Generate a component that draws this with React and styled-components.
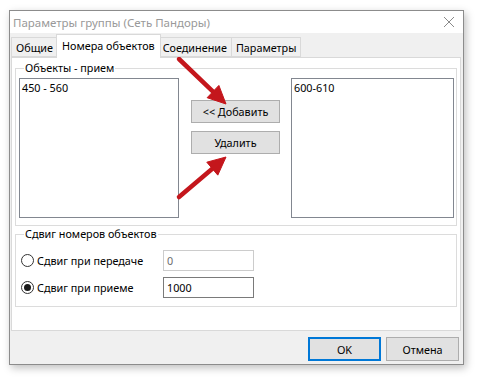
import React from 'react';
import styled, { createGlobalStyle } from 'styled-components';

const GlobalStyle = createGlobalStyle`
  body {
    margin: 0;
    background: #ffffff;
    font-family: "Noto Sans", "Open Sans", sans-serif;
    font-size: 10.8px;
    color: #000;
  }
`;

const Stage = styled.div`
  position: relative;
  width: 481px;
  height: 383px;
  padding: 10px 0 0 9px;
  box-sizing: border-box;
`;

const Window = styled.div`
  width: 455px;
  height: 355px;
  box-sizing: border-box;
  border: 1px solid #8c8c8c;
  background: #f0f0f0;
  box-shadow: 2px 3px 8px rgba(0, 0, 0, 0.25);
  display: flex;
  flex-direction: column;
`;

const TitleBar = styled.div`
  height: 22px;
  background: #ffffff;
  display: flex;
  align-items: center;
  justify-content: space-between;
  padding: 0 8px 0 3px;
  color: #999999;
  font-size: 11.5px;
`;

const Close = styled.svg`
  width: 10px;
  height: 10px;
  margin-right: 1px;
`;

const TabStrip = styled.div`
  display: flex;
  align-items: flex-end;
  height: 24px;
  padding-left: 1px;
  position: relative;
  z-index: 1;
`;

const Tab = styled.div`
  height: ${p => (p.$active ? '24px' : '20px')};
  padding: 0 ${p => (p.$active ? '5px' : '4px')};
  margin: 0 ${p => (p.$active ? '-2px' : '0')} ${p => (p.$active ? '-1px' : '0')};
  background: ${p => (p.$active ? '#ffffff' : '#f0f0f0')};
  border: 1px solid #d9d9d9;
  border-bottom: ${p => (p.$active ? 'none' : '1px solid #d9d9d9')};
  border-left-width: ${p => (p.$first || p.$active ? '1px' : '0')};
  display: flex;
  align-items: ${p => (p.$active ? 'flex-start' : 'center')};
  padding-top: ${p => (p.$active ? '3px' : '0')};
  box-sizing: border-box;
  position: relative;
  z-index: ${p => (p.$active ? 2 : 1)};
`;

const Panel = styled.div`
  margin: 0 2px 0 1px;
  height: 274px;
  box-sizing: border-box;
  border: 1px solid #d9d9d9;
  background: #ffffff;
  padding: 3px 3px 0 3px;
  display: flex;
  flex-direction: column;
  gap: 1px;
`;

const Group = styled.fieldset`
  margin: 0;
  border: 1px solid #dcdcdc;
  padding: 0 2px 0 3px;
  height: ${p => p.$h}px;
  box-sizing: border-box;
`;

const Legend = styled.legend`
  padding: 0 1px;
  margin-left: 5px;
  font-size: 10.8px;
  line-height: 14px;
`;

const ObjectsRow = styled.div`
  display: flex;
  align-items: flex-start;
  margin-top: 3px;
`;

const ListBox = styled.div`
  width: ${p => p.$w}px;
  height: 140px;
  box-sizing: border-box;
  border: 1px solid #828790;
  background: #ffffff;
  padding: 1px 2px;
  line-height: 15px;
`;

const ButtonColumn = styled.div`
  display: flex;
  flex-direction: column;
  gap: 8px;
  margin: 22px 11px 0 12px;
`;

const Button = styled.button`
  width: ${p => p.$w || 89}px;
  height: ${p => p.$h || 23}px;
  box-sizing: border-box;
  background: #e1e1e1;
  border: ${p => (p.$default ? '2px solid #0078d7' : '1px solid #adadad')};
  font-family: inherit;
  font-size: 10.8px;
  color: #000;
  padding: 0;
`;

const OptionRows = styled.div`
  display: flex;
  flex-direction: column;
  gap: 6px;
  margin-top: 9px;
`;

const OptionRow = styled.div`
  display: flex;
  align-items: center;
  height: 21px;
`;

const Radio = styled.span`
  width: 13px;
  height: 13px;
  box-sizing: border-box;
  border-radius: 50%;
  border: 1px solid #333333;
  background: #ffffff;
  margin-left: 2px;
  display: flex;
  align-items: center;
  justify-content: center;
  &::after {
    content: '';
    width: 7px;
    height: 7px;
    border-radius: 50%;
    background: ${p => (p.$checked ? '#1a1a1a' : 'transparent')};
  }
`;

const OptionLabel = styled.span`
  width: 126px;
  padding-left: 3px;
`;

const Field = styled.div`
  width: 91px;
  height: 21px;
  box-sizing: border-box;
  border: 1px solid ${p => (p.$disabled ? '#cccccc' : '#7a7a7a')};
  background: #ffffff;
  color: ${p => (p.$disabled ? '#6d6d6d' : '#000')};
  padding: 0 3px;
  line-height: 19px;
`;

const Footer = styled.div`
  flex: 1;
  display: flex;
  justify-content: flex-end;
  align-items: flex-start;
  gap: 5px;
  padding: 6px 4px 0 0;
`;

const Arrows = styled.svg`
  position: absolute;
  left: 0;
  top: 0;
  pointer-events: none;
`;

const Arrow = ({ x1, y1, x2, y2 }) => {
  const dx = x2 - x1;
  const dy = y2 - y1;
  const len = Math.hypot(dx, dy);
  const ux = dx / len;
  const uy = dy / len;
  const head = 18;
  const bx = x2 - ux * head;
  const by = y2 - uy * head;
  const w = 8.5;
  return (
    <g fill="#c4161c" stroke="#c4161c">
      <line x1={x1} y1={y1} x2={bx} y2={by} strokeWidth="4.5" strokeLinecap="round" />
      <polygon
        points={`${x2},${y2} ${bx - uy * w},${by + ux * w} ${bx + uy * w},${by - ux * w}`}
        strokeWidth="1"
        strokeLinejoin="round"
      />
    </g>
  );
};

const App = () => {
  return (
    <Stage>
      <GlobalStyle />
      <Window>
        <TitleBar>
          <span>Параметры группы (Сеть Пандоры)</span>
          <Close viewBox="0 0 10 10">
            <path d="M0 0 L10 10 M10 0 L0 10" stroke="#8a8a8a" strokeWidth="1" />
          </Close>
        </TitleBar>
        <TabStrip>
          <Tab $first>Общие</Tab>
          <Tab $active>Номера объектов</Tab>
          <Tab>Соединение</Tab>
          <Tab>Параметры</Tab>
        </TabStrip>
        <Panel>
          <Group $h={165}>
            <Legend>Объекты - прием</Legend>
            <ObjectsRow>
              <ListBox $w={160}>450 - 560</ListBox>
              <ButtonColumn>
                <Button>&lt;&lt; Добавить</Button>
                <Button>Удалить</Button>
              </ButtonColumn>
              <ListBox $w={163}>600-610</ListBox>
            </ObjectsRow>
          </Group>
          <Group $h={80}>
            <Legend>Сдвиг номеров объектов</Legend>
            <OptionRows>
              <OptionRow>
                <Radio />
                <OptionLabel>Сдвиг при передаче</OptionLabel>
                <Field $disabled>0</Field>
              </OptionRow>
              <OptionRow>
                <Radio $checked />
                <OptionLabel>Сдвиг при приеме</OptionLabel>
                <Field>1000</Field>
              </OptionRow>
            </OptionRows>
          </Group>
        </Panel>
        <Footer>
          <Button $default $w={73} $h={24}>OK</Button>
          <Button $w={73} $h={24}>Отмена</Button>
        </Footer>
      </Window>
      <Arrows width="481" height="383">
        <Arrow x1={179} y1={59} x2={226} y2={104} />
        <Arrow x1={179} y1={197} x2={226} y2={157} />
      </Arrows>
    </Stage>
  );
};

export default App;
